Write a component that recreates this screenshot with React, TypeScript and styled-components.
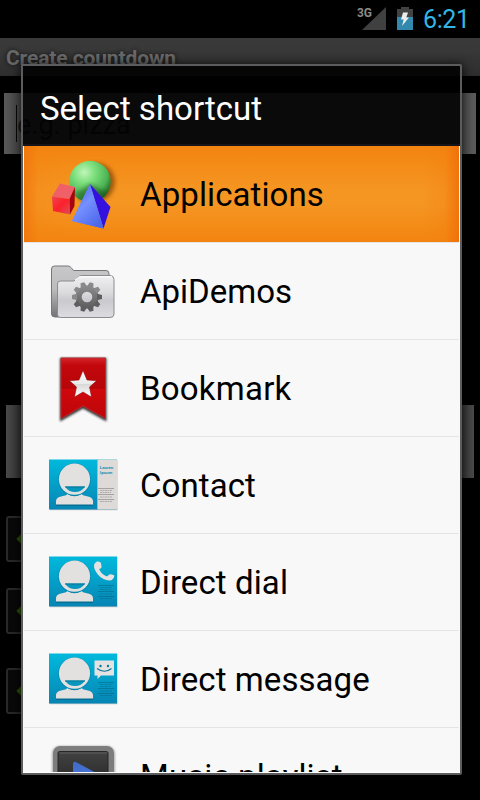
import React from "react";
import styled, { createGlobalStyle } from "styled-components";

const GlobalStyle = createGlobalStyle`
  * { box-sizing: border-box; }
  html, body { margin: 0; background: #000; }
  body { font-family: Roboto, "Liberation Sans", sans-serif; }
`;

const Screen = styled.div`
  position: relative;
  width: 480px;
  height: 800px;
  overflow: hidden;
  background: #000;
`;

const StatusBar = styled.header`
  display: flex;
  justify-content: flex-end;
  height: 38px;
  padding-right: 12px;
`;

const StatusIcons = styled.svg`
  display: block;
  width: 64px;
  height: 38px;
  margin-right: 4px;
`;

const Clock = styled.span`
  width: 45px;
  font-size: 25px;
  line-height: 40px;
  letter-spacing: -0.4px;
  color: #33b5e5;
  white-space: nowrap;
`;

const TitleBar = styled.div`
  height: 38px;
  padding-left: 6px;
  background: linear-gradient(#3a3a3a, #383838 35%, #2d2d2d);
  color: #686868;
  font-size: 21px;
  font-weight: 700;
  line-height: 40px;
  letter-spacing: -0.12px;
  text-shadow: 0 0 4px #111;
`;

const Form = styled.main`
  display: flex;
  flex-direction: column;
`;

const NameField = styled.div`
  height: 61px;
  margin: 17px 4px 0;
  padding: 12px 12px;
  background: linear-gradient(90deg, #595959, #4c4c4c 2%, #4c4c4c 96%, #5b5b5b);
`;

const Placeholder = styled.div`
  height: 37px;
  border-left: 1px solid #080808;
  color: #1c1c1c;
  font-size: 27px;
  line-height: 40px;
  white-space: nowrap;
`;

const WideButton = styled.div`
  height: 73px;
  margin: 251px 6px 38px;
  background: linear-gradient(90deg, #484848, #303030 4%, #303030 96%, #484a48);
`;

const StepButton = styled.div<{ $gap: number }>`
  display: flex;
  align-items: center;
  width: 80px;
  height: 46px;
  margin: 0 0 ${(p) => p.$gap}px 6px;
  padding-left: 10px;
  border: 2px solid #282828;
  border-radius: 3px;
  background: #080908;
`;

const Diamond = styled.span`
  width: 8px;
  height: 8px;
  background: #2c5209;
  transform: rotate(45deg);
`;

const Dialog = styled.section`
  position: absolute;
  top: 64px;
  left: 21px;
  display: flex;
  flex-direction: column;
  width: 441px;
  height: 711px;
  border: 2px solid #5c5b5d;
  border-radius: 2px;
  box-shadow: 0 1px 10px 1px rgba(0, 0, 0, 0.75);
`;

const DialogTitle = styled.h1`
  flex: none;
  height: 80px;
  margin: 0;
  padding-left: 17px;
  border-bottom: 2px solid #17151a;
  background: rgba(0, 0, 0, 0.87);
  color: #fff;
  font-size: 33px;
  font-weight: 400;
  line-height: 85px;
  white-space: nowrap;
`;

const List = styled.ul`
  flex: 1;
  min-height: 0;
  margin: 0;
  padding: 0 1px;
  overflow: hidden;
  background: #f8f8f8;
  list-style: none;
  border-bottom: 1px solid #fff;
`;

const Row = styled.li<{ $active?: boolean }>`
  display: flex;
  align-items: center;
  height: 97px;
  padding-left: 21px;
  border-bottom: 1px solid #e5e5e5;
  background: ${(p) =>
    p.$active
      ? `linear-gradient(90deg, rgba(241,116,12,.8), rgba(243,132,18,.3) 14px, rgba(244,140,24,0) 45px) 0 0 / 45px 100% no-repeat,
         linear-gradient(270deg, rgba(240,110,8,.85), rgba(243,128,16,.35) 14px, rgba(244,140,24,0) 36px) 100% 0 / 36px 100% no-repeat,
         linear-gradient(#f38410, #f59522 45%, #f59522 62%, #f38410)`
      : "transparent"};
`;

const IconArt = styled.svg`
  flex: none;
  width: 80px;
  height: 80px;
  margin-right: 15px;
`;

const Label = styled.span<{ $track: number }>`
  position: relative;
  top: 1px;
  color: #000;
  font-size: 33px;
  line-height: 40px;
  letter-spacing: ${(p) => p.$track}px;
  white-space: nowrap;
`;

const ShapesIcon = () => (
  <IconArt viewBox="45 154 80 80">
    <defs>
      <radialGradient id="ball" cx=".36" cy=".28" r=".75">
        <stop offset="0" stopColor="#c0f5ba" />
        <stop offset=".35" stopColor="#7cdf7c" />
        <stop offset=".75" stopColor="#4db555" />
        <stop offset="1" stopColor="#1f6a28" />
      </radialGradient>
      <linearGradient id="cone" x1="0" y1="0" x2=".7" y2="1">
        <stop offset="0" stopColor="#425ae0" />
        <stop offset=".5" stopColor="#7590ff" />
        <stop offset="1" stopColor="#4c68ea" />
      </linearGradient>
      <linearGradient id="cube" x1="0" y1="0" x2="1" y2="1">
        <stop offset="0" stopColor="#ef4450" />
        <stop offset=".5" stopColor="#fb202c" />
        <stop offset="1" stopColor="#dd5057" />
      </linearGradient>
      <filter id="blur"><feGaussianBlur stdDeviation="2" /></filter>
    </defs>
    <circle cx="96" cy="182" r="19" fill="#6b3500" opacity=".6" filter="url(#blur)" />
    <circle cx="90" cy="181.500" r="20.700" fill="url(#ball)" />
    <path d="M75 194 90 184 108 193 99 202H83z" fill="#174915" opacity=".5" filter="url(#blur)" />
    <path d="M60 183.500 75 187 70.500 199 52 196.500z" fill="#ef6069" />
    <path d="M52 196.500 69.500 199 70 214.500 53 211z" fill="url(#cube)" />
    <path d="M75 187 69.500 199 70 214.500 74.500 206z" fill="#a5050e" />
    <path d="M90 184 72 221 103.500 228.500z" fill="url(#cone)" />
    <path d="M90 184 110.500 207 103.500 228.500z" fill="#3511e0" />
    <path d="M90 184 72 221 103.500 228.500z" fill="url(#cone)" />
  </IconArt>
);

const GEAR_TEETH = [0, 36, 72, 108, 144, 180, 216, 252, 288, 324];

const FolderIcon = () => (
  <IconArt viewBox="45 251 80 80">
    <defs>
      <linearGradient id="folderBack" x2="0" y2="1">
        <stop stopColor="#c8c8cb" /><stop offset=".45" stopColor="#bcbcbe" /><stop offset="1" stopColor="#737377" />
      </linearGradient>
      <linearGradient id="folderFront" x2="0" y2="1">
        <stop stopColor="#f0f0f2" /><stop offset=".42" stopColor="#dadadd" /><stop offset=".6" stopColor="#c9c9ce" /><stop offset="1" stopColor="#dddde1" />
      </linearGradient>
      <linearGradient id="gear" gradientUnits="userSpaceOnUse" x1="0" y1="-15" x2="0" y2="15">
        <stop stopColor="#939396" /><stop offset="1" stopColor="#555" />
      </linearGradient>
    </defs>
    <path d="M51.500 269q0-3 3-3H68q2 0 3.500 2l2 2.500H106q3 0 3 3V317H55q-3.500 0-3.500-3z" fill="url(#folderBack)" stroke="#77777a" />
    <path d="M57.500 284q0-3 3-3H74l4-4q2-1.500 4-1.500H110q4 0 4 4V314q0 3.500-4 3.500H60.500q-3 0-3-3z" fill="url(#folderFront)" stroke="#8c8c90" />
    <path d="M75 280 79 276.800H112" stroke="#fff" fill="none" />
    <g transform="translate(87 297)">
      <path fill="none" stroke="url(#gear)" strokeWidth="6.200" d="M-8.400 0a8.400 8.400 0 1 0 16.800 0a8.400 8.400 0 1 0-16.800 0" />
      {GEAR_TEETH.map((angle) => (
        <path
          key={angle}
          transform={`rotate(${angle + 18})`}
          fill={angle < 72 || angle > 234 ? "#89898c" : "#5e5e60"}
          d="M-3.300-10-1.900-15H1.900L3.300-10z"
        />
      ))}
    </g>
  </IconArt>
);

const BookmarkIcon = () => (
  <IconArt viewBox="45 348 80 80">
    <defs>
      <linearGradient id="ribbon" x2="0" y2="1">
        <stop stopColor="#d42329" /><stop offset=".12" stopColor="#c3080c" /><stop offset=".5" stopColor="#b50508" /><stop offset=".52" stopColor="#cf080c" /><stop offset="1" stopColor="#bd0609" />
      </linearGradient>
      <linearGradient id="star" x2="0" y2="1">
        <stop stopColor="#fff" /><stop offset=".5" stopColor="#e9e9e9" /><stop offset=".52" stopColor="#d8d8d8" /><stop offset="1" stopColor="#fff" />
      </linearGradient>
      <filter id="drop" x="-20%" y="-20%" width="140%" height="140%"><feGaussianBlur stdDeviation="1.300" /></filter>
    </defs>
    <path d="M60 358H106.500V421.500L83 408.500 60 421.500z" fill="#222" opacity=".9" filter="url(#drop)" />
    <path d="M61 358H105.500V418.500L83 406 61 418.500z" fill="url(#ribbon)" stroke="#b43034" />
    <path d="M83 370.500 87 380 96.500 380.800 89.500 387 91.500 397 83 392 74.500 397 76.500 387 69.500 380.800 79 380z" fill="url(#star)" stroke="#8e0205" strokeWidth=".5" />
  </IconArt>
);

type CardKind = "contact" | "dial" | "message";

const ContactCardIcon = ({ kind }: { kind: CardKind }) => (
  <IconArt viewBox="45 445 80 80">
    <defs>
      <linearGradient id={`card-${kind}`} x2="0" y2="1">
        <stop stopColor="#00b9dc" /><stop offset="1" stopColor="#0785b4" />
      </linearGradient>
    </defs>
    <path d="M50 460H117.500V510.300H50z" fill="#aaa" opacity=".65" />
    <path d="M49 459.500H117V509.500H49z" fill={`url(#card-${kind})`} />
    <g fill="#075d7a" opacity=".6" transform="translate(0 1)">
      <circle cx="74.500" cy="479" r="16" />
      <path d="M56 505V500q0-4 7-5 5-1 6-2.500H80q1 1.500 6 2.500 7 1 7 5V505z" />
    </g>
    <path d="M56 504.500V501q0-4 7-5 3.500-.5 4.500-2 7 4.500 14 0 1 1.500 4.500 2 7 1 7 5V504.500z" fill="#e3e1df" />
    <circle cx="74.500" cy="479.500" r="16.300" fill="#0a8fb6" />
    <circle cx="74.500" cy="479.200" r="15.600" fill="#e3e1df" />
    <path d="M65 486.500H85q-3.500 5.500-10 5.500T65 486.500z" fill="#0796bd" />
    <path d="M65 487H85" stroke="#087698" />
    {kind === "contact" && (
      <g>
        <path d="M98 459.500H117V509.500H98z" fill="#dddad7" />
        <path d="M97.500 459.500V509.500" stroke="#a5b9bd" />
        <g fill="#2193b2" fontFamily="Roboto, sans-serif" fontSize="4.400" fontWeight="700">
          <text x="99.800" y="469" textLength="13.500">Lauren</text>
          <text x="99.800" y="473.700" textLength="12.500">Ipsum</text>
        </g>
      </g>
    )}
    {kind === "dial" && (
      <path d="M97 464.500q3-.5 4 1.500l.6 4q0 1.500-2.500 2 2.300 5.500 8 7.500l1.800-1.800q1.500-1 5.500.7 0 1.500-1.500 3.500-2 2.500-6.500 1.200-7.400-2.200-11-9.300-3.500-7 1.600-9.300z" fill="#e5e3e1" />
    )}
    {kind === "message" && (
      <g>
        <path d="M94.500 466.500H114V481.500H101L97.500 485V481.500H94.500z" fill="#e5e3e1" />
        <path d="M97 474.500q7.500 5.500 14.500 0" fill="none" stroke="#06769a" strokeWidth="1.200" />
        <circle cx="100.500" cy="472" r="1.200" fill="#06769a" /><circle cx="108" cy="472" r="1.200" fill="#06769a" />
      </g>
    )}
    <g stroke={kind === "contact" ? "#686766" : "#075f7c"} strokeWidth=".8">
      <path d="M98 488.500H114M98 494.500H114M98 499.500H114" opacity=".6" />
      <path d="M100 490.500H112M100 492.500H111M100 497H112M100 501.500H112" strokeDasharray="2 .5" opacity=".5" />
    </g>
  </IconArt>
);

const MusicIcon = () => (
  <IconArt viewBox="45 736 80 80">
    <defs>
      <linearGradient id="speaker" x2="0" y2="1"><stop stopColor="#424242" /><stop offset="1" stopColor="#191919" /></linearGradient>
      <linearGradient id="play" x2="0" y2="1"><stop stopColor="#4169c4" /><stop offset="1" stopColor="#4b80ef" /></linearGradient>
      <filter id="musicShade"><feGaussianBlur stdDeviation="1" /></filter>
    </defs>
    <rect x="52" y="746" width="63" height="63" rx="8" fill="#aaa" filter="url(#musicShade)" />
    <rect x="53" y="746" width="61" height="63" rx="7" fill="#7d7d7e" />
    <rect x="58" y="751.500" width="50" height="52" rx="1.500" fill="url(#speaker)" stroke="#262626" />
    <path d="M59.500 753H107" stroke="#606060" />
    <path d="M73 764q0-3 3-2l23 12.500q1 1 0 2L76 788q-3 1-3-2z" fill="url(#play)" />
  </IconArt>
);

const shortcuts = [
  { label: "Applications", track: 0.1, icon: <ShapesIcon /> },
  { label: "ApiDemos", track: 0, icon: <FolderIcon /> },
  { label: "Bookmark", track: 0.22, icon: <BookmarkIcon /> },
  { label: "Contact", track: 0.08, icon: <ContactCardIcon kind="contact" /> },
  { label: "Direct dial", track: 0.1, icon: <ContactCardIcon kind="dial" /> },
  { label: "Direct message", track: 0.07, icon: <ContactCardIcon kind="message" /> },
  { label: "Music playlist", track: 0.1, icon: <MusicIcon /> },
];

export default function App() {
  return (
    <Screen>
      <GlobalStyle />
      <StatusBar>
        <StatusIcons viewBox="355 0 64 38">
          <path d="M386 7V30H362z" fill="#404040" />
          <text x="357" y="17" fill="#8b8b8b" stroke="#000" strokeWidth="2" paintOrder="stroke" fontFamily="Roboto, sans-serif" fontSize="12" fontWeight="700" textLength="15">3G</text>
          <path d="M397 9H401V7H409V9H413V30H397z" fill="#424242" />
          <path d="M397 17H413V30H397z" fill="#3389ad" />
          <path d="M403 12.500H408L406.300 17.500H409L402 26 403.700 19.500H401z" fill="#ededed" />
        </StatusIcons>
        <Clock>6:21</Clock>
      </StatusBar>
      <TitleBar>Create countdown</TitleBar>
      <Form>
        <NameField><Placeholder>e.g. pizza</Placeholder></NameField>
        <WideButton />
        <StepButton $gap={26}><Diamond /></StepButton>
        <StepButton $gap={34}><Diamond /></StepButton>
        <StepButton $gap={0}><Diamond /></StepButton>
      </Form>
      <Dialog role="dialog">
        <DialogTitle>Select shortcut</DialogTitle>
        <List>
          {shortcuts.map((item, i) => (
            <Row key={item.label} $active={i === 0}>
              {item.icon}
              <Label $track={item.track}>{item.label}</Label>
            </Row>
          ))}
        </List>
      </Dialog>
    </Screen>
  );
}
